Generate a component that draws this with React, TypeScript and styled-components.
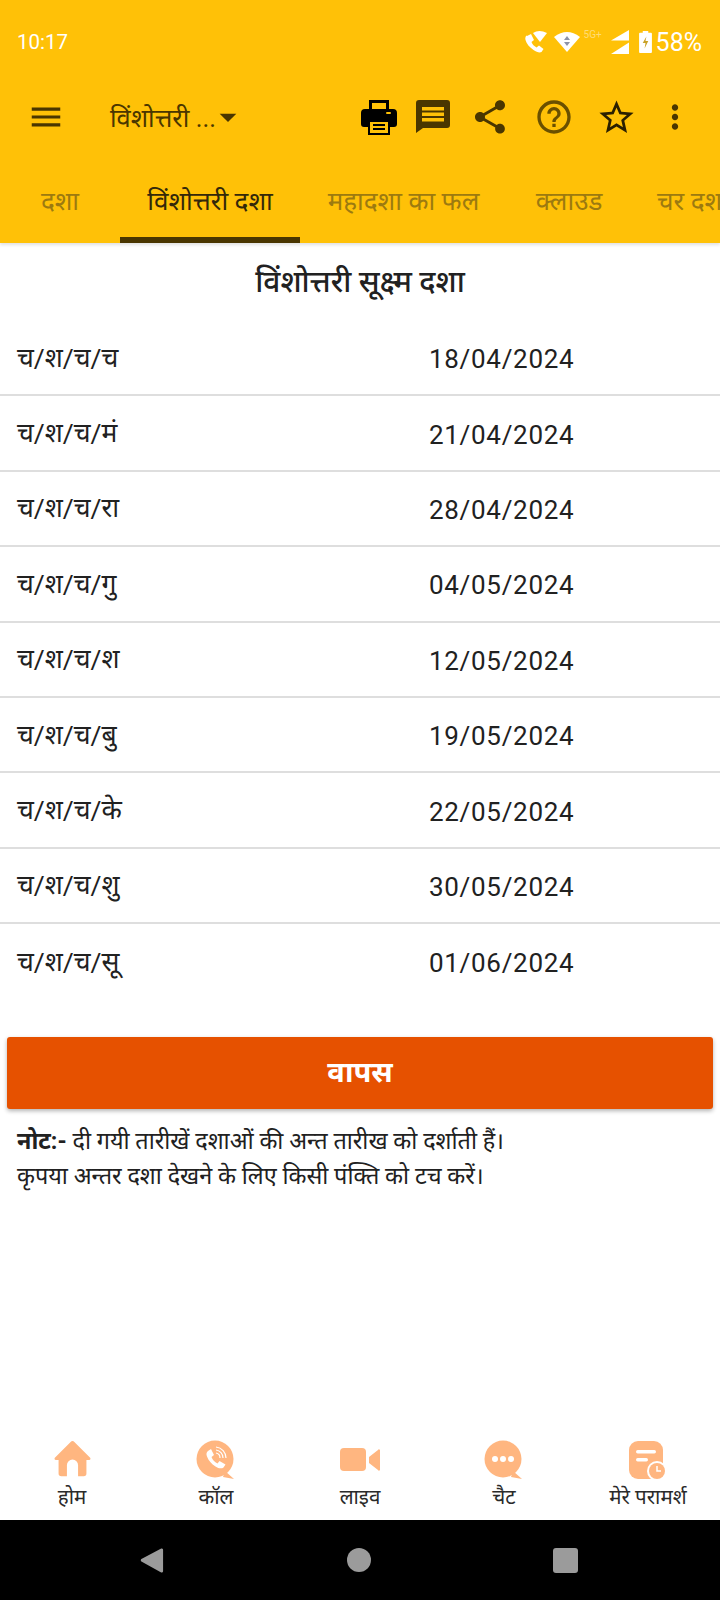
import styled, { createGlobalStyle } from 'styled-components';
import { MdMenu, MdArrowDropDown, MdShare, MdHelpOutline, MdStarBorder, MdMoreVert } from 'react-icons/md';

const GlobalStyle = createGlobalStyle`
  html, body { margin: 0; padding: 0; background: #fff; }
  * { box-sizing: border-box; }
  body { font-family: Roboto, "Noto Sans", "Noto Sans Devanagari", "Lohit Devanagari", "Liberation Sans", sans-serif; }
`;

const DARK = '#4a3600';
const PEACH = '#ffb680';

const rows = [
  ['च/श/च/च', '18/04/2024'],
  ['च/श/च/मं', '21/04/2024'],
  ['च/श/च/रा', '28/04/2024'],
  ['च/श/च/गु', '04/05/2024'],
  ['च/श/च/श', '12/05/2024'],
  ['च/श/च/बु', '19/05/2024'],
  ['च/श/च/के', '22/05/2024'],
  ['च/श/च/शु', '30/05/2024'],
  ['च/श/च/सू', '01/06/2024'],
];

const tabs = [
  { label: 'दशा', width: 120 },
  { label: 'विंशोत्तरी दशा', width: 180, active: true },
  { label: 'महादशा का फल', width: 207 },
  { label: 'क्लाउड', width: 124 },
  { label: 'चर दशा', width: 124 },
];

const HomeIcon = () => (
  <svg width="39" height="41" viewBox="0 0 42 44">
    <path d="M21 1 a3 3 0 0 1 2 1 L40 19 a1.5 1.5 0 0 1 -1 2.5 H36 V36 a3 3 0 0 1 -3 3 H27 V27 a6 6 0 0 0 -12 0 V39 H9 a3 3 0 0 1 -3 -3 V21.5 H3 a1.5 1.5 0 0 1 -1 -2.5 L19 2 a3 3 0 0 1 2 -1 Z" fill={PEACH} />
  </svg>
);

const CallIcon = () => (
  <svg width="40" height="40" viewBox="0 0 40 40">
    <circle cx="19" cy="19" r="18.5" fill={PEACH} />
    <path d="M29 31 L38 39 L27 37 Z" fill={PEACH} />
    <path d="M12 11 l3 -2 l3 6 l-2.500 2 c1 3 3 5 6 6.500 l2 -2.500 l6 3.500 l-2 3 c-2 1.500 -5 1 -8 -1 c-4 -2.500 -7 -6 -8.500 -10 c-1 -2.500 -0.500 -4.500 1 -5.500 Z" fill="#fff" />
    <path d="M20 7 a11 11 0 0 1 10 11 M20 10 a8 8 0 0 1 7 8 M20 13 a5 5 0 0 1 4 5" fill="none" stroke="#fff" strokeWidth="1.200" />
  </svg>
);

const VideoIcon = () => (
  <svg width="40" height="26" viewBox="0 0 40 26">
    <rect x="0" y="1" width="26" height="23" rx="4" fill={PEACH} />
    <path d="M29 10 L38 3 a1 1 0 0 1 2 1 V22 a1 1 0 0 1 -2 1 L29 16 Z" fill={PEACH} />
  </svg>
);

const ChatIcon = () => (
  <svg width="40" height="40" viewBox="0 0 40 40">
    <circle cx="19" cy="19" r="18.500" fill={PEACH} />
    <path d="M29 31 L38 39 L27 37 Z" fill={PEACH} />
    <circle cx="11" cy="19" r="3" fill="#fff" />
    <circle cx="19" cy="19" r="3" fill="#fff" />
    <circle cx="27" cy="19" r="3" fill="#fff" />
  </svg>
);

const ConsultIcon = () => (
  <svg width="40" height="40" viewBox="0 0 40 40">
    <rect x="1" y="1" width="34" height="38" rx="9" fill={PEACH} />
    <rect x="8" y="10" width="20" height="3.500" rx="1.700" fill="#fff" />
    <rect x="8" y="18" width="12" height="3.500" rx="1.700" fill="#fff" />
    <circle cx="29" cy="31" r="10" fill="#fff" />
    <circle cx="29" cy="31" r="8" fill={PEACH} />
    <path d="M29 26 V31 H33" fill="none" stroke="#fff" strokeWidth="1.500" />
  </svg>
);

const navItems = [
  { label: 'होम', icon: <HomeIcon /> },
  { label: 'कॉल', icon: <CallIcon /> },
  { label: 'लाइव', icon: <VideoIcon /> },
  { label: 'चैट', icon: <ChatIcon /> },
  { label: 'मेरे परामर्श', icon: <ConsultIcon /> },
];

export default function App() {
  return (
    <Page>
      <GlobalStyle />
      <Header>
        <StatusBar>
          <Clock>10:17</Clock>
          <StatusIcons>
            <svg width="24" height="24" viewBox="0 0 24 24">
              <path d="M3 6 l4 -2 l3 6 l-2.500 2 c1 2.500 2.500 4 5 5.500 l2.500 -2 l4.500 3.500 l-2 3 c-2 1 -5 0 -8 -2 c-4 -3 -7 -6 -8 -10 c-0.500 -2 0 -3.500 1 -4.500 Z" fill="#fff" />
              <path d="M9 3 Q15 -1 23 3 L16 12 Z" fill="#fff" />
            </svg>
            <WifiIcon width="26" height="22" viewBox="0 0 26 22">
              <path d="M0 6 Q13 -4 26 6 L13 21 Z" fill="#fff" />
              <path d="M13 5 L16 9 H10 Z M13 15 L16 11 H10 Z" fill="#8d93a8" />
            </WifiIcon>
            <FiveG>5G+</FiveG>
            <SignalIcon width="18" height="24" viewBox="0 0 18 24">
              <path d="M18 0 V10.500 H0 Z" fill="#fff" />
              <path d="M18 12.500 V24 H0 Z" fill="#fff" />
            </SignalIcon>
            <BatteryIcon width="13" height="22" viewBox="0 0 14 24">
              <path d="M4 0 H10 V2 H13 a1 1 0 0 1 1 1 V23 a1 1 0 0 1 -1 1 H1 a1 1 0 0 1 -1 -1 V3 a1 1 0 0 1 1 -1 H4 Z" fill="#fff" />
              <path d="M8 6 L4 13 H7 L6 19 L10 11 H7 Z" fill="#c9a227" />
            </BatteryIcon>
            <Percent>58%</Percent>
          </StatusIcons>
        </StatusBar>
        <Toolbar>
          <MenuButton><MdMenu size={38} /></MenuButton>
          <Spinner>
            <SpinnerText>विंशोत्तरी ...</SpinnerText>
            <DropIcon><MdArrowDropDown size={40} /></DropIcon>
          </Spinner>
          <Actions>
            <ActionSlot $width={60}>
              <svg width="38" height="36" viewBox="0 0 38 36">
                <path d="M9 1 H29 V10 H26 V4 H12 V10 H9 Z" fill="#000" />
                <path d="M5 10 H33 a4 4 0 0 1 4 4 V25 a3 3 0 0 1 -3 3 H30 V21 H8 V28 H4 a3 3 0 0 1 -3 -3 V14 a4 4 0 0 1 4 -4 Z" fill="#000" />
                <rect x="26" y="13" width="5" height="2" rx="1" fill="#ffc107" />
                <rect x="9" y="22" width="20" height="13" fill="#ffc107" stroke="#000" strokeWidth="2" />
                <rect x="13" y="25" width="12" height="2" fill="#000" />
                <rect x="13" y="29" width="12" height="2" fill="#000" />
              </svg>
            </ActionSlot>
            <ActionSlot $width={48}>
              <svg width="34" height="34" viewBox="0 0 34 34">
                <path d="M3 0 H31 a3 3 0 0 1 3 3 V25 a3 3 0 0 1 -3 3 H7 L0 33 V3 a3 3 0 0 1 3 -3 Z" fill={DARK} />
                <rect x="6" y="7" width="22" height="3.500" fill="#ffc107" />
                <rect x="6" y="12.500" width="22" height="3.500" fill="#ffc107" />
                <rect x="6" y="18" width="22" height="3.500" fill="#ffc107" />
              </svg>
            </ActionSlot>
            <ActionSlot $width={66}><MdShare size={40} color={DARK} /></ActionSlot>
            <ActionSlot $width={62}><MdHelpOutline size={40} color="#6a5000" /></ActionSlot>
            <ActionSlot $width={63}><MdStarBorder size={41} color="#2b2000" /></ActionSlot>
            <ActionSlot $width={54}><MdMoreVert size={38} color={DARK} /></ActionSlot>
          </Actions>
        </Toolbar>
        <TabBar>
          {tabs.map((tab) => (
            <Tab key={tab.label} $active={!!tab.active} $width={tab.width}>{tab.label}</Tab>
          ))}
        </TabBar>
      </Header>
      <Main>
        <Title>विंशोत्तरी सूक्ष्म दशा</Title>
        <Table>
          {rows.map(([name, date]) => (
            <Row key={name}>
              <NameCell>{name}</NameCell>
              <DateCell>{date}</DateCell>
            </Row>
          ))}
        </Table>
        <BackButton>वापस</BackButton>
        <Note>
          <strong>नोट:-</strong> दी गयी तारीखें दशाओं की अन्त तारीख को दर्शाती हैं।
          <br />
          कृपया अन्तर दशा देखने के लिए किसी पंक्ति को टच करें।
        </Note>
      </Main>
      <BottomNav>
        {navItems.map((item) => (
          <NavItem key={item.label}>
            <NavIcon>{item.icon}</NavIcon>
            <NavLabel>{item.label}</NavLabel>
          </NavItem>
        ))}
      </BottomNav>
      <SystemBar>
        <svg width="24" height="27" viewBox="0 0 26 28">
          <path d="M23 1 a1.500 1.500 0 0 1 2 1.500 V25.500 a1.500 1.500 0 0 1 -2 1.500 L1.500 15 a1.500 1.500 0 0 1 0 -2.500 Z" fill="#9b9b9b" />
        </svg>
        <HomeDot />
        <RecentSquare />
      </SystemBar>
    </Page>
  );
}

const Page = styled.div`
  width: 720px;
  height: 1600px;
  display: flex;
  flex-direction: column;
  overflow: hidden;
  background: #fff;
`;

const Header = styled.header`
  height: 243px;
  flex: none;
  background: #ffc107;
  display: flex;
  flex-direction: column;
  box-shadow: 0 2px 3px rgba(0, 0, 0, 0.12);
  position: relative;
`;

const StatusBar = styled.div`
  height: 84px;
  padding: 0 18px 0 17px;
  display: flex;
  align-items: center;
  justify-content: space-between;
`;

const Clock = styled.span`
  color: #fff;
  font-size: 20.500px;
`;

const StatusIcons = styled.div`
  display: flex;
  align-items: center;
`;

const WifiIcon = styled.svg`
  margin-left: 6px;
`;

const FiveG = styled.span`
  width: 24px;
  margin: -16px 0 0 4px;
  color: rgba(255, 255, 255, 0.45);
  font-size: 10px;
`;

const SignalIcon = styled.svg`
  margin-left: 3px;
`;

const BatteryIcon = styled.svg`
  margin-left: 10px;
`;

const Percent = styled.span`
  margin-left: 4px;
  color: #fff;
  font-size: 25px;
`;

const Toolbar = styled.div`
  height: 66px;
  display: flex;
  align-items: center;
  color: ${DARK};
`;

const MenuButton = styled.div`
  width: 110px;
  padding-left: 27px;
  display: flex;
  align-items: center;
`;

const Spinner = styled.div`
  display: flex;
  align-items: center;
  width: 240px;
`;

const SpinnerText = styled.span`
  font-size: 25.500px;
  color: ${DARK};
`;

const DropIcon = styled.span`
  display: flex;
  margin-left: -8px;
`;

const Actions = styled.div`
  display: flex;
  align-items: center;
  margin-left: -1px;
`;

const ActionSlot = styled.div<{ $width: number }>`
  width: ${(p) => p.$width}px;
  display: flex;
  justify-content: center;
`;

const TabBar = styled.div`
  flex: 1;
  display: flex;
  overflow: hidden;
`;

const Tab = styled.div<{ $active: boolean; $width: number }>`
  flex: none;
  width: ${(p) => p.$width}px;
  padding-top: 12px;
  display: flex;
  align-items: center;
  justify-content: center;
  font-size: 26px;
  white-space: nowrap;
  color: ${(p) => (p.$active ? '#33280a' : '#9c7a10')};
  border-bottom: 6px solid ${(p) => (p.$active ? DARK : 'transparent')};
`;

const Main = styled.main`
  flex: 1;
  display: flex;
  flex-direction: column;
`;

const Title = styled.h1`
  margin: 0;
  height: 78px;
  padding-bottom: 3px;
  display: flex;
  align-items: center;
  justify-content: center;
  font-size: 30px;
  font-weight: 500;
  color: #212121;
`;

const Table = styled.div`
  display: flex;
  flex-direction: column;
`;

const Row = styled.div`
  height: 75.400px;
  display: flex;
  align-items: center;
  padding-left: 17px;
  border-bottom: 2px solid #dedede;
  &:last-child {
    border-bottom: none;
  }
`;

const NameCell = styled.span`
  width: 412px;
  padding-bottom: 2px;
  font-size: 26.500px;
  color: #212121;
`;

const DateCell = styled.span`
  padding-top: 3px;
  font-size: 26px;
  letter-spacing: 0.7px;
  color: #212121;
`;

const BackButton = styled.button`
  margin: 37px 7px 0;
  height: 72px;
  padding-bottom: 5px;
  flex: none;
  border: none;
  border-radius: 3px;
  background: #e65100;
  color: #fff;
  font-family: inherit;
  font-size: 29px;
  font-weight: 700;
  box-shadow: 0 2px 4px rgba(0, 0, 0, 0.3);
`;

const Note = styled.p`
  margin: 15px 0 0;
  padding: 0 17px;
  font-size: 23.400px;
  line-height: 35px;
  color: #212121;
`;

const BottomNav = styled.nav`
  height: 100px;
  flex: none;
  display: grid;
  grid-template-columns: repeat(5, 1fr);
`;

const NavItem = styled.div`
  display: flex;
  flex-direction: column;
  align-items: center;
`;

const NavIcon = styled.div`
  height: 46px;
  margin-top: 17px;
  display: flex;
  align-items: center;
  justify-content: center;
`;

const NavLabel = styled.span`
  margin-top: 1px;
  font-size: 20.500px;
  line-height: 26px;
  color: #2a2a2a;
`;

const SystemBar = styled.div`
  height: 80px;
  flex: none;
  background: #000;
  display: flex;
  justify-content: space-between;
  align-items: center;
  padding: 0 142px 0 140px;
`;

const HomeDot = styled.div`
  width: 24px;
  height: 24px;
  border-radius: 50%;
  background: #9b9b9b;
`;

const RecentSquare = styled.div`
  width: 25px;
  height: 25px;
  border-radius: 3px;
  background: #9b9b9b;
`;
